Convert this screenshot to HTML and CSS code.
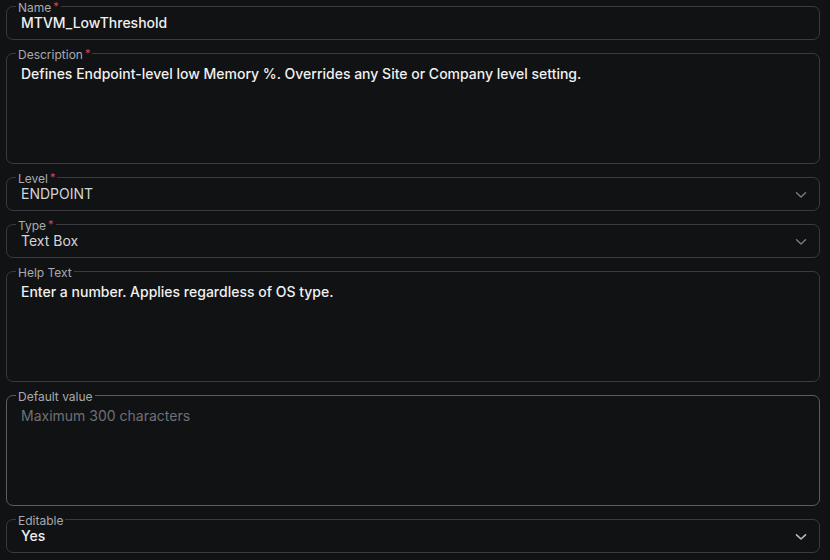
FILE: index.html
```html
<!DOCTYPE html>
<html>
<head>
<meta charset="utf-8">
<link rel="stylesheet" href="styles.css">
</head>
<body>
<div class="form">
  <fieldset class="field">
    <legend>Name<span class="req">*</span></legend>
    <div class="value strong">MTVM_LowThreshold</div>
  </fieldset>
  <fieldset class="field big">
    <legend>Description<span class="req">*</span></legend>
    <div class="value strong multi">Defines Endpoint-level low Memory %. Overrides any Site or Company level setting.</div>
  </fieldset>
  <fieldset class="field select">
    <legend>Level<span class="req">*</span></legend>
    <div class="value plain">ENDPOINT</div>
    <svg class="chev" width="12" height="8" viewBox="0 0 12 8"><path d="M1.5 1.8 L6 6 L10.5 1.8" fill="none" stroke="currentColor" stroke-width="1.4" stroke-linecap="round" stroke-linejoin="round"/></svg>
  </fieldset>
  <fieldset class="field select">
    <legend>Type<span class="req">*</span></legend>
    <div class="value plain">Text Box</div>
    <svg class="chev" width="12" height="8" viewBox="0 0 12 8"><path d="M1.5 1.8 L6 6 L10.5 1.8" fill="none" stroke="currentColor" stroke-width="1.4" stroke-linecap="round" stroke-linejoin="round"/></svg>
  </fieldset>
  <fieldset class="field big">
    <legend>Help Text</legend>
    <div class="value strong multi">Enter a number. Applies regardless of OS type.</div>
  </fieldset>
  <fieldset class="field big hover">
    <legend>Default value</legend>
    <div class="value placeholder multi">Maximum 300 characters</div>
  </fieldset>
  <fieldset class="field select">
    <legend>Editable</legend>
    <div class="value strong">Yes</div>
    <svg class="chev bright" width="12" height="8" viewBox="0 0 12 8"><path d="M1.5 1.8 L6 6 L10.5 1.8" fill="none" stroke="currentColor" stroke-width="1.6" stroke-linecap="round" stroke-linejoin="round"/></svg>
  </fieldset>
</div>
</body>
</html>
```
FILE: styles.css
```css
html, body {
  margin: 0;
  padding: 0;
  background: #111214;
}
body {
  font-family: Inter, "Noto Sans", sans-serif;
  color: #e8e8e8;
}
.form {
  display: flex;
  flex-direction: column;
  gap: 7px;
  padding: 0 10px 0 6px;
}
.field {
  position: relative;
  margin: 0;
  padding: 1px 40px 6px 9px;
  border: 1px solid #3a3b3f;
  border-radius: 7px;
  min-width: 0;
  height: 40px;
  box-sizing: border-box;
}
.field.big {
  height: 117px;
  padding-top: 0;
}
.field.hover {
  border-color: #5c5d61;
  border-width: 1.5px;
}
legend {
  position: relative;
  top: 2px;
  padding: 0 2px;
  font-size: 12px;
  line-height: 12px;
  color: #a9aaad;
}
.req {
  color: #d6435a;
  font-size: 11px;
  margin-left: 2px;
  position: relative;
  top: -2px;
}
.value {
  padding-left: 5px;
  font-size: 14px;
  line-height: 20px;
  white-space: nowrap;
}
.value.multi {
  padding-top: 5px;
}
.strong {
  font-weight: 500;
  color: #f0f0f0;
}
.plain {
  font-weight: 400;
  color: #d4d4d6;
}
.placeholder {
  font-weight: 400;
  color: #6f7074;
}
.chev {
  position: absolute;
  right: 12px;
  top: 8px;
  color: #7b7c80;
}
.chev.bright {
  color: #b9babd;
}
```
